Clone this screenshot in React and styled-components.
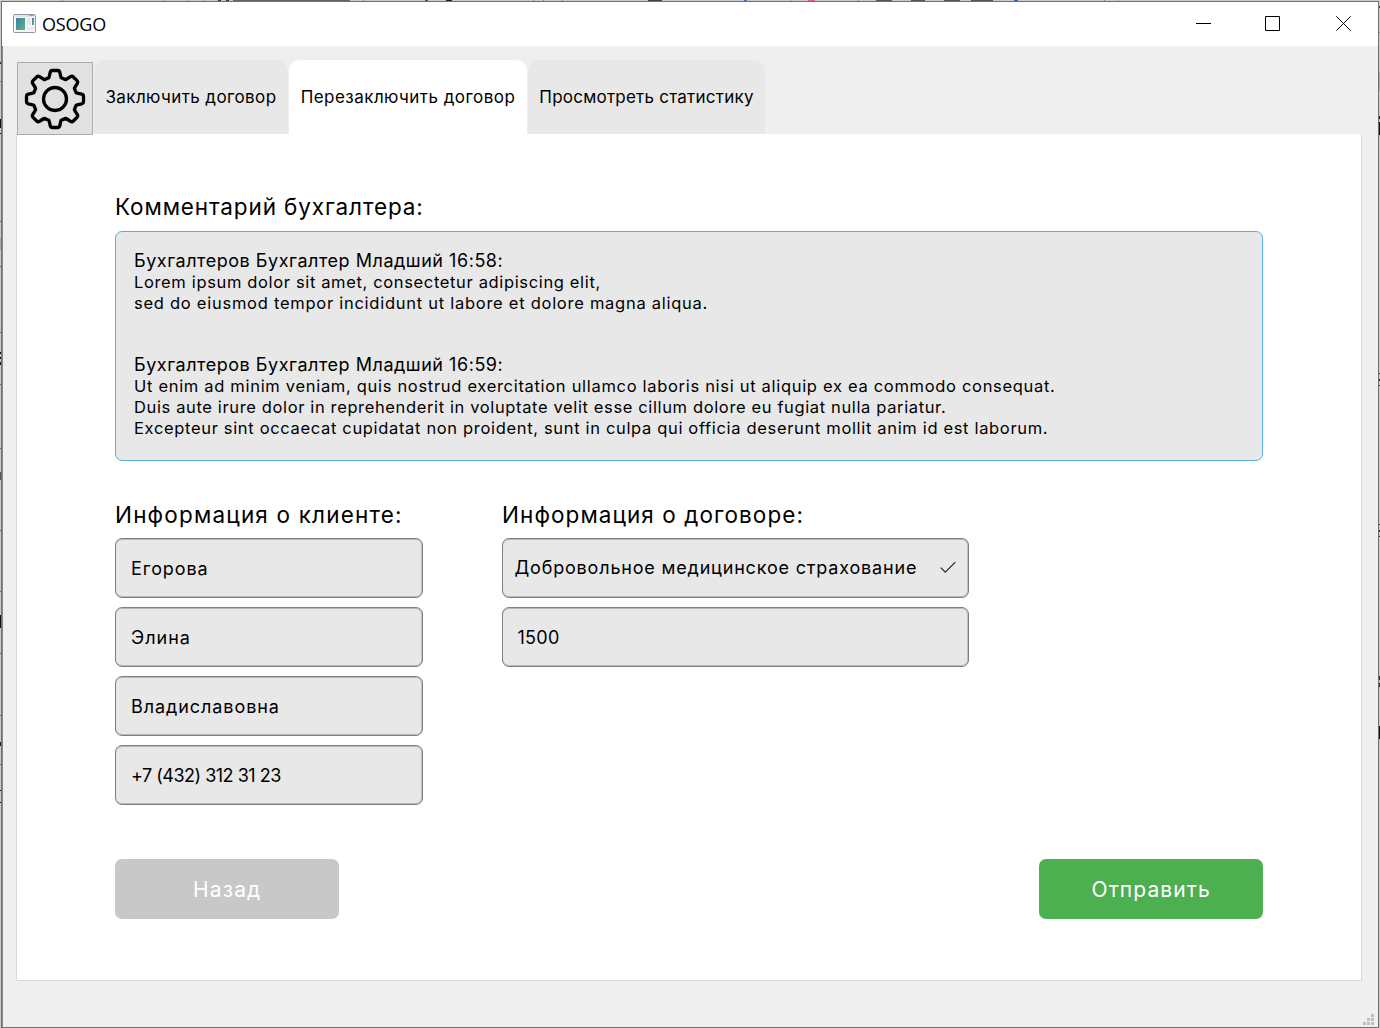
import React from 'react';
import styled, { createGlobalStyle, css } from 'styled-components';

const GlobalStyle = createGlobalStyle`
  *, *::before, *::after { box-sizing: border-box; }
  body { margin: 0; background: #c9c9c9; }
`;

const Desktop = styled.div`
  display: grid;
  grid-template-columns: 1px 1fr 1px;
  grid-template-rows: 1px 1fr;
  width: 1380px;
  height: 1028px;
  overflow: hidden;
  color: #000;
  font-family: Inter, "Noto Sans", sans-serif;
`;

const band = ([from, to, color]) => `transparent ${from}px, ${color} ${from}px, ${color} ${to}px, transparent ${to}px`;

const Edge = styled.div`
  background: ${({ $side, $marks }) =>
    `linear-gradient(${$side === 'top' ? 'to right' : 'to bottom'}, ${$marks.map(band).join(', ')}) #cbcbcb`};
  ${({ $side }) => $side === 'top' && css`grid-column: 1 / -1;`}
`;

const Window = styled.div`
  display: flex;
  flex-direction: column;
  min-width: 0;
  background: #efefef;
  border: 1px solid #707070;
`;

const TitleBar = styled.header`
  flex: none;
  display: flex;
  align-items: center;
  height: 44px;
  padding: 0 0 2px 11px;
  background: #fff;
`;

const Title = styled.h1`
  flex: 1;
  margin: 1px 0 0 6px;
  font: 400 18px/24px "Open Sans", sans-serif;
  letter-spacing: -0.2px;
`;

const CaptionButton = styled.button`
  display: flex;
  align-items: center;
  justify-content: center;
  width: ${({ $width }) => $width}px;
  height: 42px;
  padding: 0;
  border: 0;
  background: none;
`;

const Body = styled.div`
  flex: 1;
  display: flex;
  flex-direction: column;
  padding: 14px 16px 0 13px;
  border-left: 1px solid #838c92;
`;

const TabBar = styled.nav`
  flex: none;
  display: flex;
  height: 74px;
  padding-left: 1px;
`;

const SettingsButton = styled.button`
  position: relative;
  width: 76px;
  height: 73px;
  margin: 2px 1px -1px 0;
  padding: 0;
  display: flex;
  align-items: center;
  justify-content: center;
  border: 1px solid #adadad;
  background: #e1e1e1;
`;

const Tab = styled.button`
  width: ${({ $width }) => $width}px;
  height: 74px;
  margin-right: 1px;
  padding: 0 0 1px;
  border: 0;
  border-radius: 11px 11px 0 0;
  background: ${({ $active }) => ($active ? '#fff' : '#e8e8e8')};
  color: #000;
  font: inherit;
  font-size: 17px;
  letter-spacing: ${({ $track }) => $track}px;
  white-space: nowrap;
`;

const Panel = styled.main`
  flex: none;
  display: flex;
  flex-direction: column;
  height: 847px;
  padding: 58px 97px 0 98px;
  border: 1px solid #d9d9d9;
  border-top: 0;
  background: #fff;
`;

const Label = styled.h2`
  margin: 0;
  height: ${({ $height = 38 }) => $height}px;
  font-size: 22.5px;
  font-weight: 400;
  line-height: 30px;
  letter-spacing: ${({ $track }) => $track}px;
  white-space: nowrap;
`;

const Comments = styled.section`
  display: flex;
  flex-direction: column;
  gap: 39px;
  width: 1148.4px;
  height: 230px;
  padding: 17px 18px;
  border: 1px solid #55b0e6;
  border-radius: 7px;
  background: #e8e8e8;
`;

const Author = styled.p`
  margin: 0;
  font-size: 18px;
  line-height: 23px;
  letter-spacing: ${({ $track }) => $track}px;
`;

const Line = styled.p`
  margin: 0;
  font-size: 16.5px;
  line-height: 21px;
  letter-spacing: ${({ $track }) => $track}px;
  white-space: nowrap;
`;

const Forms = styled.div`
  display: flex;
  gap: 78.6px;
  margin-top: 39px;
`;

const Form = styled.section`
  display: flex;
  flex-direction: column;
  width: ${({ $width }) => $width}px;
`;

const Fields = styled.div`
  display: flex;
  flex-direction: column;
  gap: 9px;
`;

const Field = styled.div`
  display: flex;
  align-items: center;
  justify-content: space-between;
  height: 60px;
  padding: 0 12px ${({ $lift = 0 }) => $lift}px ${({ $inset = 15 }) => $inset}px;
  border: 1px solid #808080;
  border-radius: 7px;
  background: #e8e8e8;
  box-shadow: inset -1px 0 #c0c0c0, inset 0 1px #b8b8b8, inset 0 -1px #b8b8b8;
  font-size: 18px;
  letter-spacing: ${({ $track }) => $track}px;
  white-space: nowrap;
`;

const Actions = styled.footer`
  display: flex;
  justify-content: space-between;
  width: 1148.4px;
  margin-top: 54px;
`;

const ActionButton = styled.button`
  width: 224.4px;
  height: 60px;
  padding: 1px 0 0;
  border: 0;
  border-radius: 7px;
  background: ${({ $primary }) => ($primary ? '#4caf50' : '#c8c8c8')};
  color: #fff;
  font: inherit;
  font-size: 21px;
  letter-spacing: 1.1px;
`;

const StatusBar = styled.div`
  flex: 1;
  display: flex;
  justify-content: flex-end;
  align-items: flex-end;
  margin-right: -12px;
  padding-bottom: 2px;
`;

const topMarks = [[62, 63, '#999'], [163, 164, '#999'], [188, 189, '#999'], [204, 205, '#999'], [218, 221, '#333'], [226, 229, '#333'],
  [233, 350, '#666'], [363, 364, '#888'], [425, 428, '#555'], [446, 452, '#222'], [533, 534, '#888'], [543, 544, '#888'], [562, 563, '#888'],
  [648, 662, '#444'], [744, 747, '#4775bd'], [791, 792, '#aaa'], [808, 815, '#d9667a'], [858, 859, '#888'], [876, 892, '#555'], [911, 925, '#555'],
  [944, 960, '#555'], [971, 993, '#555'], [1014, 1018, '#3864ae'], [1104, 1105, '#888'], [1118, 1119, '#aaa']];
const leftMarks = [[61, 63, '#333'], [80, 81, '#777'], [118, 127, '#111'], [132, 133, '#111'], [220, 221, '#666'], [237, 249, '#aaa'],
  [265, 266, '#666'], [331, 332, '#666'], [351, 353, '#111'], [356, 358, '#111'], [361, 364, '#111'], [383, 384, '#666'], [447, 448, '#666'],
  [471, 479, '#555'], [529, 530, '#666'], [590, 591, '#666'], [614, 627, '#111'], [652, 653, '#666'], [714, 715, '#666'], [741, 745, '#222'],
  [763, 764, '#666'], [789, 790, '#111'], [801, 802, '#111']];
const rightMarks = [[5, 7, '#555'], [31, 32, '#999'], [71, 90, '#aaa'], [115, 118, '#222'], [121, 134, '#111'], [372, 373, '#222'], [378, 380, '#222'],
  [384, 385, '#222'], [523, 524, '#222'], [529, 531, '#222'], [535, 536, '#222'], [675, 679, '#333'], [682, 686, '#333'], [725, 738, '#111']];

const gearPath = (() => {
  const tooth = [[-6.2, -21.2], [-5.6, -22.6], [-4.8, -26.7], [-4.4, -28.5], [-2.6, -28.5], [2.6, -28.5], [4.4, -28.5], [4.8, -26.7], [5.6, -22.6], [6.2, -21.2]];
  let d = '';
  for (let i = 0; i < 8; i += 1) {
    const a = (i * Math.PI) / 4;
    const p = tooth.map(([x, y]) => `${(x * Math.cos(a) - y * Math.sin(a)).toFixed(2)} ${(x * Math.sin(a) + y * Math.cos(a)).toFixed(2)}`);
    d += `${i ? 'L' : 'M'}${p[0]}Q${p[1]} ${p[2]}Q${p[3]} ${p[4]}L${p[5]}Q${p[6]} ${p[7]}Q${p[8]} ${p[9]}`;
  }
  return `${d}Z`;
})();

const GearIcon = () => (
  <svg width="62" height="62" viewBox="-31 -31 62 62" fill="none" stroke="#000" strokeWidth="3.3" strokeLinejoin="round">
    <path d={gearPath} />
    <circle r="11.5" />
  </svg>
);

const AppIcon = () => (
  <svg width="23" height="19" viewBox="0 0 23 19">
    <defs>
      <linearGradient id="screen" x1="0" y1="0" x2="1" y2="1">
        <stop offset="0" stopColor="#3d7fa6" />
        <stop offset="1" stopColor="#5eb782" />
      </linearGradient>
    </defs>
    <rect x="0.5" y="0.5" width="22" height="18" rx="1" fill="#f6f6f8" stroke="#9097a3" />
    <path d="M1 2h21" stroke="#cdd3de" />
    <path d="M16 1.5h5" stroke="#8d9fc4" />
    <rect x="3" y="4" width="9" height="12" fill="url(#screen)" />
    <rect x="14" y="4" width="4" height="7" fill="#e6e7e9" />
    <rect x="19" y="4" width="2" height="7" fill="url(#screen)" />
    <rect x="14" y="13" width="7" height="3" fill="#e9e9eb" />
  </svg>
);

const CheckIcon = () => (
  <svg width="16" height="13" viewBox="0 0 16 13" fill="none" stroke="#222" strokeWidth="1.2">
    <path d="M0.8 6.7L5.3 11.2L15.3 1.2" />
  </svg>
);

const SizeGrip = () => (
  <svg width="11" height="11" viewBox="0 0 11 11" fill="#bfbfbf">
    <path d="M8 0h3v3h-3zM4 4h3v3h-3zM8 4h3v3h-3zM0 8h3v3h-3zM4 8h3v3h-3zM8 8h3v3h-3z" />
  </svg>
);

const captions = [
  ['Свернуть', 64, 'M0 7.5h15'],
  ['Развернуть', 74, 'M0.5 0.5h14v14h-14z'],
  ['Закрыть', 69, 'M0.3 0.3l14.4 14.4M14.7 0.3l-14.4 14.4'],
];

const tabs = [
  { text: 'Заключить договор', width: 194, track: 0.4 },
  { text: 'Перезаключить договор', width: 238, track: 0.46, active: true },
  { text: 'Просмотреть статистику', width: 237, track: 0.23 },
];

const comments = [
  {
    author: 'Бухгалтеров Бухгалтер Младший 16:58:',
    lines: [
      ['Lorem ipsum dolor sit amet, consectetur adipiscing elit,', 0.645],
      ['sed do eiusmod tempor incididunt ut labore et dolore magna aliqua.', 0.735],
    ],
  },
  {
    author: 'Бухгалтеров Бухгалтер Младший 16:59:',
    lines: [
      ['Ut enim ad minim veniam, quis nostrud exercitation ullamco laboris nisi ut aliquip ex ea commodo consequat.', 0.69],
      ['Duis aute irure dolor in reprehenderit in voluptate velit esse cillum dolore eu fugiat nulla pariatur.', 0.63],
      ['Excepteur sint occaecat cupidatat non proident, sunt in culpa qui officia deserunt mollit anim id est laborum.', 0.665],
    ],
  },
];

const client = [['Егорова', 0.9], ['Элина', 1], ['Владиславовна', 0.93], ['+7 (432) 312 31 23', -0.5]];

export default function App() {
  return (
    <>
      <GlobalStyle />
      <Desktop>
        <Edge $side="top" $marks={topMarks} />
        <Edge $side="left" $marks={leftMarks} />
        <Window>
          <TitleBar>
            <AppIcon />
            <Title>OSOGO</Title>
            {captions.map(([name, width, d]) => (
              <CaptionButton key={name} $width={width} aria-label={name}>
                <svg width="15" height="15" viewBox="0 0 15 15" fill="none" stroke="#000"><path d={d} /></svg>
              </CaptionButton>
            ))}
          </TitleBar>
          <Body>
            <TabBar>
              <SettingsButton><GearIcon /></SettingsButton>
              {tabs.map((tab) => (
                <Tab key={tab.text} $width={tab.width} $track={tab.track} $active={tab.active}>{tab.text}</Tab>
              ))}
            </TabBar>
            <Panel>
              <Label $height={39} $track={0.87}>Комментарий бухгалтера:</Label>
              <Comments>
                {comments.map(({ author, lines }) => (
                  <div key={author}>
                    <Author $track={0.53}>{author}</Author>
                    {lines.map(([text, track]) => <Line key={text} $track={track}>{text}</Line>)}
                  </div>
                ))}
              </Comments>
              <Forms>
                <Form $width={308.4}>
                  <Label $track={1.18}>Информация о клиенте:</Label>
                  <Fields>
                    {client.map(([text, track]) => <Field key={text} $track={track}>{text}</Field>)}
                  </Fields>
                </Form>
                <Form $width={467.4}>
                  <Label $track={1.07}>Информация о договоре:</Label>
                  <Fields>
                    <Field $track={0.82} $inset={11.5} $lift={1}>Добровольное медицинское страхование<CheckIcon /></Field>
                    <Field $track={0.3} $inset={14.5}>1500</Field>
                  </Fields>
                </Form>
              </Forms>
              <Actions>
                <ActionButton>Назад</ActionButton>
                <ActionButton $primary>Отправить</ActionButton>
              </Actions>
            </Panel>
            <StatusBar><SizeGrip /></StatusBar>
          </Body>
        </Window>
        <Edge $side="right" $marks={rightMarks} />
      </Desktop>
    </>
  );
}
